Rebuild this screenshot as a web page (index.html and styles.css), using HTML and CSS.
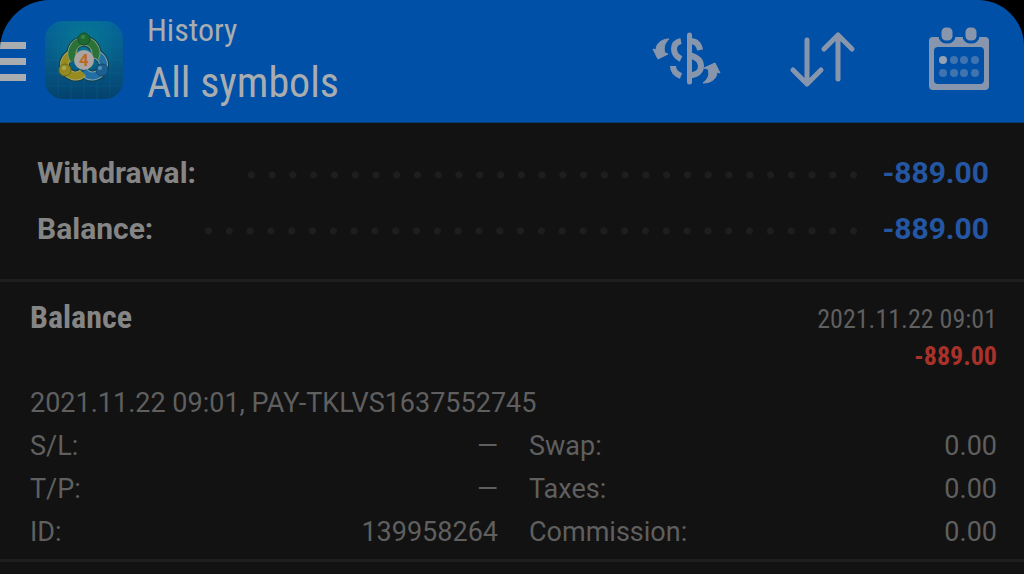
FILE: index.html
```html
<!DOCTYPE html>
<html lang="en">
<head>
    <meta charset="UTF-8">
    <meta name="viewport" content="width=device-width, initial-scale=1.0">
    <title>History</title>
    <link rel="stylesheet" href="styles.css">
</head>
<body>
    <div class="screen">
        <header class="toolbar">
            <button class="menu-button" aria-label="Menu">
                <span class="bar"></span>
                <span class="bar"></span>
                <span class="bar"></span>
            </button>
            <svg class="app-icon" viewBox="0 0 78 78" aria-hidden="true">
                <defs>
                    <linearGradient id="tile" x1="0" y1="0" x2="0" y2="1">
                        <stop offset="0" stop-color="#04649b"/>
                        <stop offset="0.5" stop-color="#075a87"/>
                        <stop offset="1" stop-color="#04426f"/>
                    </linearGradient>
                    <radialGradient id="glow" cx="0.5" cy="0.25" r="0.5">
                        <stop offset="0" stop-color="#087f91" stop-opacity="0.8"/>
                        <stop offset="1" stop-color="#087f91" stop-opacity="0"/>
                    </radialGradient>
                </defs>
                <rect width="78" height="78" rx="18" fill="url(#tile)"/>
                <rect width="78" height="78" rx="18" fill="url(#glow)"/>
                <path d="M13 1v76M26 0v78M39 0v78M52 0v78M65 1v76M1 13h76M0 26h78M0 39h78M0 52h78M1 65h76" stroke="#1779a0" stroke-opacity="0.2" fill="none"/>
                <!-- three interlocking figures: dark edge, light rim, body -->
                <g fill="none" stroke="#123f45">
                    <path d="M29 39A12 12 0 1 1 50 37" stroke-width="11"/>
                    <path d="M32 33A11 11 0 1 0 38 52" stroke-width="11"/>
                    <path d="M46 33A11 11 0 1 1 39 51" stroke-width="11"/>
                </g>
                <g fill="none" stroke-width="9">
                    <path d="M46 33A11 11 0 1 1 39 51" stroke="#7fa0b4"/>
                    <path d="M46 33A11 11 0 1 1 39 51" stroke="#2270a3" stroke-width="7"/>
                    <path d="M32 33A11 11 0 1 0 38 52" stroke="#a9a367"/>
                    <path d="M32 33A11 11 0 1 0 38 52" stroke="#978b20" stroke-width="7"/>
                    <path d="M29 39A12 12 0 1 1 50 37" stroke="#7d9c7c"/>
                    <path d="M29 39A12 12 0 1 1 50 37" stroke="#2b7238" stroke-width="7"/>
                </g>
                <circle cx="39" cy="18" r="6" fill="#1c6a32" stroke="#164a2c"/>
                <circle cx="38" cy="16" r="2" fill="#3f8048"/>
                <circle cx="20" cy="49" r="6" fill="#938b22" stroke="#6a681e"/>
                <circle cx="19" cy="47" r="2" fill="#b0a958"/>
                <circle cx="57" cy="49" r="6" fill="#1c5f92" stroke="#14466e"/>
                <circle cx="55" cy="47" r="2" fill="#5490b5"/>
                <circle cx="39" cy="39" r="10" fill="#aaa5a4"/>
                <text x="39" y="45" text-anchor="middle" class="app-icon-digit">4</text>
            </svg>
            <div class="titles">
                <p class="caption">History</p>
                <h1 class="filter-name">All symbols</h1>
            </div>
            <div class="actions">
                <button class="action" aria-label="Symbol">
                    <svg viewBox="0 0 72 72" fill="none" stroke="#8796ad" stroke-width="6">
                        <path d="M38.500 10V57" stroke-width="5" stroke-linecap="round"/>
                        <path d="M30 16C25 17 23 20 23 24C23 29 26 32 30 34"/>
                        <path d="M39 16C45 16 48 19 49 25"/>
                        <path d="M38 30C46 32 50 35 50 41C50 46 46 50 39 50"/>
                        <path d="M22 41C22 46 25 49 30 51"/>
                        <g fill="#8796ad" stroke-width="1" stroke-linejoin="round">
                            <path d="M18 14C10 14 5 19 5 25L2 24L7 34L17 29L14 28C12 22 14 18 18 14Z"/>
                            <path d="M52 58C61 58 66 53 66 47L69 48L64 38L53 43L57 44C59 50 57 54 52 58Z"/>
                        </g>
                    </svg>
                </button>
                <button class="action" aria-label="Sort">
                    <svg viewBox="0 0 72 72" fill="none" stroke="#8796ad" stroke-width="5" stroke-linecap="round" stroke-linejoin="round">
                        <path d="M20 15V58M6 45L20 59L34 45"/>
                        <path d="M51 54V11M37 24L51 10L65 24"/>
                    </svg>
                </button>
                <button class="action" aria-label="Period">
                    <svg viewBox="0 0 72 72">
                        <path fill="#8796ad" fill-rule="evenodd" d="M10 12H62Q66 12 66 16V61Q66 65 62 65H10Q6 65 6 61V16Q6 12 10 12ZM15 22Q11 22 11 26V55Q11 59 15 59H57Q61 59 61 55V26Q61 22 57 22Z"/>
                        <g fill="#8796ad" stroke="#0050a8" stroke-width="3">
                            <rect x="17" y="1" width="14" height="16" rx="6"/>
                            <rect x="41" y="1" width="14" height="16" rx="6"/>
                        </g>
                        <circle cx="20" cy="35" r="4" fill="#93a2b5"/>
                        <g fill="#3f74ae">
                            <circle cx="31" cy="35" r="4"/>
                            <circle cx="41" cy="35" r="4"/>
                            <circle cx="52" cy="35" r="4"/>
                            <circle cx="20" cy="48" r="4"/>
                            <circle cx="31" cy="48" r="4"/>
                            <circle cx="41" cy="48" r="4"/>
                            <circle cx="52" cy="48" r="4"/>
                        </g>
                    </svg>
                </button>
            </div>
        </header>

        <dl class="summary">
            <div class="summary-row">
                <dt>Withdrawal:</dt>
                <dd>-889.00</dd>
            </div>
            <div class="summary-row">
                <dt>Balance:</dt>
                <dd>-889.00</dd>
            </div>
        </dl>

        <article class="deal">
            <div class="deal-head">
                <h2 class="deal-type">Balance</h2>
                <div class="deal-result">
                    <time datetime="2021-11-22T09:01">2021.11.22 09:01</time>
                    <p class="loss">-889.00</p>
                </div>
            </div>
            <p class="comment">2021.11.22 09:01, PAY-TKLVS1637552745</p>
            <div class="details">
                <dl>
                    <div class="detail"><dt>S/L:</dt><dd>—</dd></div>
                    <div class="detail"><dt>T/P:</dt><dd>—</dd></div>
                    <div class="detail"><dt>ID:</dt><dd>139958264</dd></div>
                </dl>
                <dl>
                    <div class="detail"><dt>Swap:</dt><dd>0.00</dd></div>
                    <div class="detail"><dt>Taxes:</dt><dd>0.00</dd></div>
                    <div class="detail"><dt>Commission:</dt><dd>0.00</dd></div>
                </dl>
            </div>
        </article>
    </div>
</body>
</html>
```

FILE: styles.css
```css
* {
    box-sizing: border-box;
}
body {
    margin: 0;
    background: #000;
    color: #5f5f5f;
    font-family: Roboto, "Liberation Sans", sans-serif;
    font-size: 27px;
}
h1, h2, p, dl, dd {
    margin: 0;
}
button {
    padding: 0;
    border: none;
    background: none;
    cursor: pointer;
}
.screen {
    min-height: 100vh;
    background: #121212;
    border-radius: 50px 46px 0 0;
    overflow: hidden;
}

/* Toolbar */
.toolbar {
    display: flex;
    align-items: center;
    padding: 8px 29px 8px 0;
    background: #0050a8;
    border-bottom: 1px solid #0a3a73;
}
.menu-button {
    display: flex;
    flex-direction: column;
    gap: 9px;
    width: 26px;
}
.bar {
    height: 7px;
    background: #a9adb0;
}
.app-icon {
    width: 78px;
    height: 78px;
    margin: 0 24px 2px 19px;
}
.app-icon-digit {
    font-size: 17px;
    font-weight: bold;
    fill: #bb6a25;
}
.titles {
    flex: 1;
    color: #a9adb0;
    font-family: "Roboto Condensed", Roboto, "Liberation Sans", sans-serif;
}
.caption {
    font-size: 32px;
    line-height: 44px;
}
.filter-name {
    font-size: 42px;
    font-weight: normal;
    line-height: 62px;
}
.actions {
    display: flex;
    gap: 64px;
}
.action svg {
    display: block;
    width: 72px;
    height: 72px;
}

/* Totals with dotted leaders */
.summary {
    padding: 22px 35px 22px 37px;
    border-bottom: 3px solid #1e1e1e;
    font-size: 30px;
    font-weight: bold;
    line-height: 56px;
}
.summary-row {
    display: flex;
    align-items: center;
}
.summary-row dt {
    color: #858585;
}
.summary-row::before {
    content: "";
    order: 1;
    flex: 1;
    height: 8px;
    margin: 4px 18px 0 45px;
    background: radial-gradient(circle, #1e1e1e 3px, transparent 4px) 0 0 / 21px 8px round;
}
.summary-row dd {
    order: 2;
    color: #2456a4;
}

/* Deal card */
.deal {
    padding: 17px 27px 5px 30px;
    border-bottom: 3px solid #1e1e1e;
}
.deal-head {
    display: flex;
    align-items: baseline;
    justify-content: space-between;
    margin-bottom: 7px;
    font-family: "Roboto Condensed", Roboto, "Liberation Sans", sans-serif;
    font-size: 26px;
    line-height: 37px;
}
.deal-type {
    color: #858585;
    font-size: 32px;
}
.deal-result {
    text-align: right;
}
.loss {
    color: #a8322a;
    font-weight: bold;
}
.comment {
    line-height: 43px;
}
.details {
    display: grid;
    grid-template-columns: 1fr 1fr;
    gap: 31px;
}
.detail {
    display: flex;
    justify-content: space-between;
    line-height: 43px;
}
```
